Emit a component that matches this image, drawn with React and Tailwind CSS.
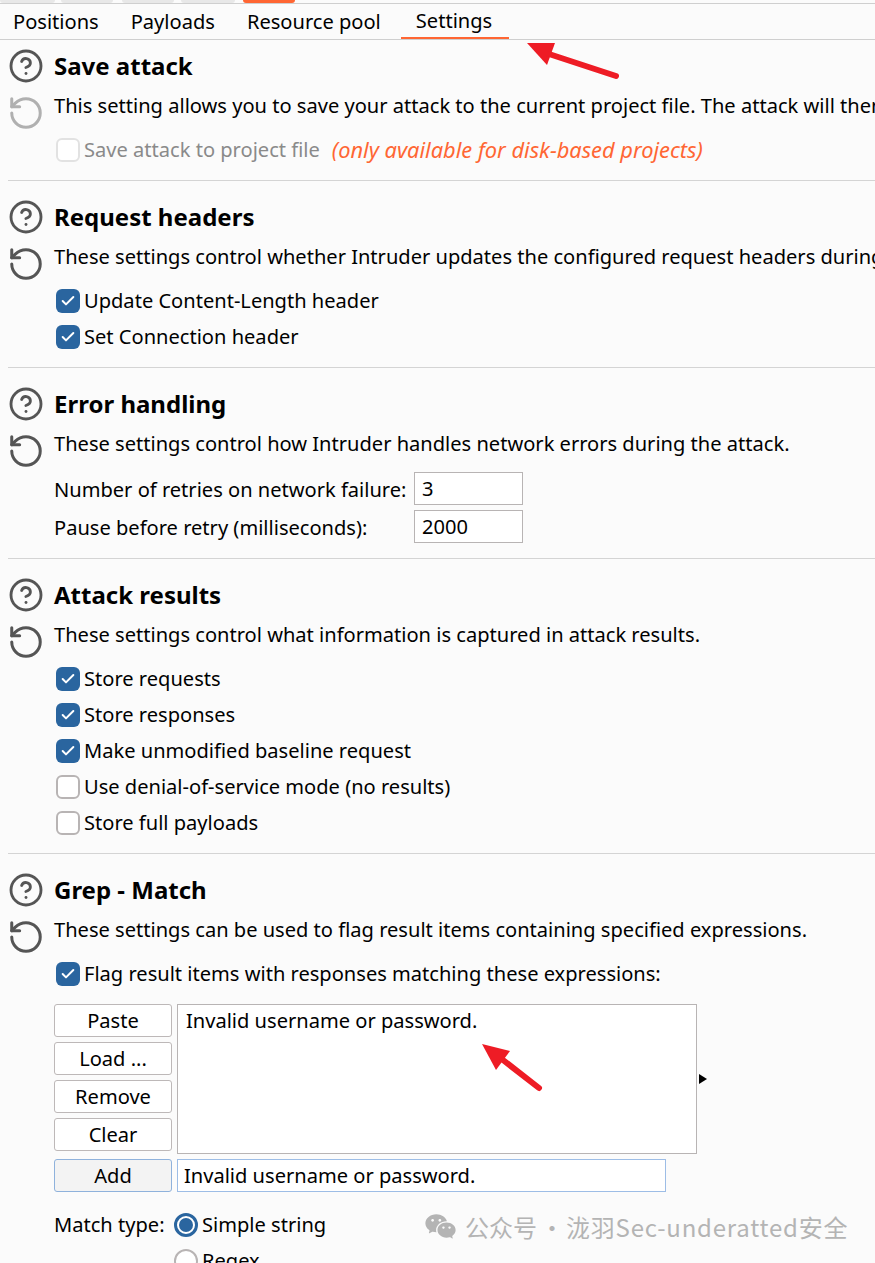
import React from "react";
import { CircleHelp, RotateCcw, Check } from "lucide-react";
import { RiWechatFill } from "react-icons/ri";

const tabs = ["Positions", "Payloads", "Resource pool", "Settings"];

function Checkbox({ checked, label, disabled }) {
  return (
    <div className="flex items-center h-[36px] pl-[2px]">
      {checked ? (
        <span className="w-[24px] h-[24px] rounded-md bg-[#2a659f] flex items-center justify-center">
          <Check size={16} strokeWidth={3} className="text-white" />
        </span>
      ) : (
        <span className={`w-[24px] h-[24px] rounded-md border-2 ${disabled ? "border-[#e2e2e2]" : "border-[#b8b4b4]"} bg-white`} />
      )}
      <span className={`ml-[4px] ${disabled ? "text-[#8a8a8a]" : ""}`}>{label}</span>
    </div>
  );
}

function Section({ title, desc, fadedReset, border = true, className = "", children }) {
  return (
    <section className={`ml-[8px] flex ${border ? "border-b border-[#d4d4d4]" : ""} ${className}`}>
      <div className="w-[46px] shrink-0 flex flex-col items-center pr-[10px]">
        <CircleHelp size={38} strokeWidth={1.9} className="text-[#555555] h-[36px]" />
        <RotateCcw size={38} strokeWidth={1.9} className={`mt-[10px] ${fadedReset ? "text-[#b0b0b0]" : "text-[#555555]"}`} />
      </div>
      <div className="flex-1">
        <h2 className="h-[36px] flex items-center text-[24px] font-bold">{title}</h2>
        <p className="h-[36px] mt-[4px] flex items-center">{desc}</p>
        {children}
      </div>
    </section>
  );
}

function NumberRow({ label, value }) {
  return (
    <div className="flex items-center h-[38px]">
      <span className="w-[360px] pt-[1px]">{label}</span>
      <span className="w-[109px] h-[33px] mb-[2px] border border-[#b8b4b4] bg-white flex items-center pl-[7px] pt-[1px]">{value}</span>
    </div>
  );
}

function SideButton({ label }) {
  return (
    <button className="w-[118px] h-[33px] rounded-[3px] border border-[#bdb8b8] bg-white flex items-center justify-center">
      {label}
    </button>
  );
}

export default function App() {
  return (
    <div className="relative w-[875px] h-[1263px] overflow-hidden whitespace-nowrap bg-[#fbfbfb] text-black text-[20.08px] leading-[28px] font-['Noto_Sans','Noto_Sans_CJK_SC',sans-serif]">
      {/* cropped row of tabs above */}
      <div className="flex h-[3px] border-b border-[#cfcfcf] box-content">
        <span className="w-[55px] bg-[#e8e8e8] rounded-b" />
        <span className="w-[52px] ml-[6px] bg-[#e8e8e8] rounded-b" />
        <span className="w-[52px] ml-[9px] bg-[#e8e8e8] rounded-b" />
        <span className="w-[54px] ml-[7px] bg-[#e8e8e8] rounded-b" />
        <span className="w-[52px] ml-[8px] bg-[#ff6633] rounded-b" />
      </div>

      <nav className="flex h-[36px] border-b border-[#cfcfcf]">
        {tabs.map((t, i) => (
          <div
            key={t}
            className={`h-[35px] flex items-center ${i === 0 ? "-ml-[3px]" : ""} ${t === "Settings" ? "ml-[4px] pl-[15px] pr-[17px] border-b-2 border-[#ff6633]" : "px-[16px]"}`}
          >
            {t}
          </div>
        ))}
      </nav>

      <Section title="Save attack" fadedReset className="pt-[8px] pb-[12px]"
        desc="This setting allows you to save your attack to the current project file. The attack will then be saved with the project.">
        <div className="mt-[8px] flex items-center">
          <Checkbox label="Save attack to project file" disabled />
          <em className="ml-[12px] text-[21.8px] text-[#ff6633]">(only available for disk-based projects)</em>
        </div>
      </Section>

      <Section title="Request headers" className="pt-[18px] pb-[12px]"
        desc="These settings control whether Intruder updates the configured request headers during the attack.">
        <div className="mt-[8px]">
          <Checkbox checked label="Update Content-Length header" />
          <Checkbox checked label="Set Connection header" />
        </div>
      </Section>

      <Section title="Error handling" className="pt-[18px] pb-[12px]"
        desc="These settings control how Intruder handles network errors during the attack.">
        <div className="mt-[8px]">
          <NumberRow label="Number of retries on network failure:" value="3" />
          <NumberRow label="Pause before retry (milliseconds):" value="2000" />
        </div>
      </Section>

      <Section title="Attack results" className="pt-[18px] pb-[12px]"
        desc="These settings control what information is captured in attack results.">
        <div className="mt-[8px]">
          <Checkbox checked label="Store requests" />
          <Checkbox checked label="Store responses" />
          <Checkbox checked label="Make unmodified baseline request" />
          <Checkbox label="Use denial-of-service mode (no results)" />
          <Checkbox label="Store full payloads" />
        </div>
      </Section>

      <Section title="Grep - Match" border={false} className="pt-[18px]"
        desc="These settings can be used to flag result items containing specified expressions.">
        <div className="mt-[8px]">
          <Checkbox checked label="Flag result items with responses matching these expressions:" />
        </div>
        <div className="mt-[12px] flex gap-[5px]">
          <div className="flex flex-col gap-[5px]">
            <SideButton label="Paste" />
            <SideButton label="Load ..." />
            <SideButton label="Remove" />
            <SideButton label="Clear" />
          </div>
          <div className="w-[520px] h-[150px] border border-[#b8b4b4] bg-white pl-[8px] pt-[2px]">
            Invalid username or password.
          </div>
          <svg width="10" height="12" viewBox="0 0 10 12" className="self-center -ml-[4px]">
            <path d="M1 1 L9 6 L1 11 Z" fill="#000" />
          </svg>
        </div>
        <div className="mt-[5px] flex gap-[5px]">
          <button className="w-[118px] h-[33px] rounded-[3px] border border-[#8fb2dc] bg-[#f3f3f3] flex items-center justify-center">
            Add
          </button>
          <div className="w-[489px] h-[33px] border-[1.5px] border-[#9dbde6] bg-white flex items-center pl-[6px]">
            Invalid username or password.
          </div>
        </div>
        <div className="mt-[15px] flex">
          <span className="h-[36px] flex items-center w-[120px]">Match type:</span>
          <div className="flex flex-col">
            <div className="flex items-center h-[36px]">
              <span className="w-[24px] h-[24px] rounded-full border-[3px] border-[#2a659f] bg-white flex items-center justify-center">
                <span className="w-[14px] h-[14px] rounded-full bg-[#2a659f]" />
              </span>
              <span className="ml-[4px]">Simple string</span>
            </div>
            <div className="flex items-center h-[36px]">
              <span className="w-[24px] h-[24px] rounded-full border-2 border-[#b8b4b4] bg-white" />
              <span className="ml-[4px]">Regex</span>
            </div>
          </div>
        </div>
      </Section>

      {/* annotation arrows */}
      <svg className="absolute left-0 top-0 pointer-events-none" width="875" height="1263">
        <path d="M527 43 L555 43 L547 65 Z" fill="#ee1c25" />
        <path d="M549 54 L616 76" stroke="#ee1c25" strokeWidth="6" strokeLinecap="round" />
        <path d="M482 1044 L510 1051 L496 1070 Z" fill="#ee1c25" />
        <path d="M503 1060 L539 1088" stroke="#ee1c25" strokeWidth="6" strokeLinecap="round" />
      </svg>

      {/* watermark */}
      <div className="absolute left-[424px] top-[1210px] flex items-center text-[#b4b4b4] text-[24px] font-['Noto_Sans_CJK_SC','Noto_Sans',sans-serif]">
        <RiWechatFill size={33} className="text-[#b4b4b4]" />
        <span className="ml-[8px]">公众号</span>
        <span className="ml-[3px]">·</span>
        <span className="ml-[2px] tracking-[0.78px]">泷羽Sec-underatted安全</span>
      </div>
    </div>
  );
}
